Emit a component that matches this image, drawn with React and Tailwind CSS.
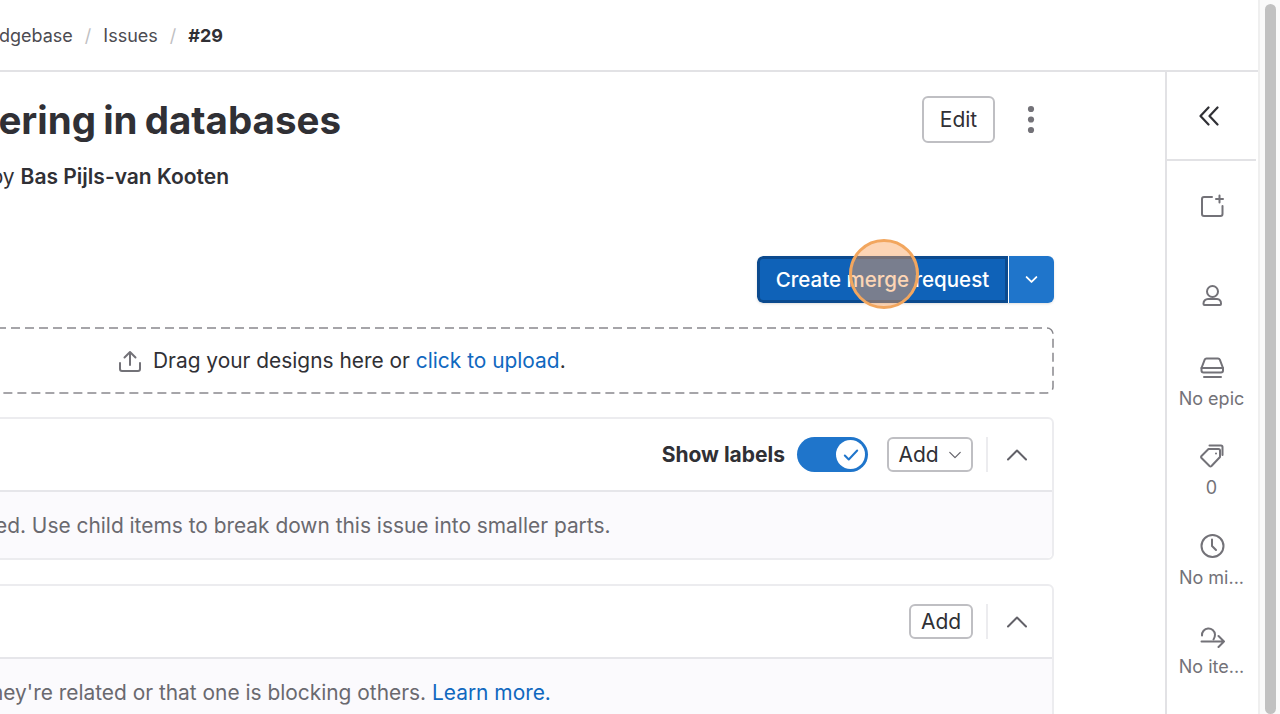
const Chevron = ({ className = '', width = 2 }) => (
  <svg viewBox="0 0 24 24" fill="none" stroke="currentColor" strokeWidth={width} strokeLinecap="round" strokeLinejoin="round" className={className}>
    <path d="M3 16.5 12 7.5l9 9" />
  </svg>
)

function SideItem({ icon, label }) {
  return (
    <div className={`flex h-[89.5px] flex-col items-center justify-center ${label ? 'pb-[6px]' : ''}`}>
      {icon}
      {label && <span className="mt-[8px] text-[18px] leading-[22px] whitespace-nowrap text-[#737278]">{label}</span>}
    </div>
  )
}

const iconProps = {
  fill: 'none',
  stroke: '#737278',
  strokeWidth: 2,
  strokeLinecap: 'round',
  strokeLinejoin: 'round',
  viewBox: '0 0 26 26',
  className: 'h-[26px] w-[26px] shrink-0',
}

function Card({ children, body, top = '' }) {
  return (
    <section className={`-ml-[10px] w-[1064px] rounded-md border-2 border-[#ececef] ${top}`}>
      <header className="flex h-[71px] items-center justify-end pr-[7px]">{children}</header>
      <div className="flex h-[68px] items-center justify-start overflow-hidden rounded-b-md border-t-2 border-[#e6e6ea] bg-[#fbfafd] pt-[2px] pl-[8px] text-[20.9px] whitespace-nowrap text-[#6a696f]">
        {body}
      </div>
    </section>
  )
}

function CardEnd() {
  return (
    <>
      <div className="ml-[13px] h-[35px] w-[2px] bg-[#ececef]" />
      <div className="flex w-[57px] justify-center">
        <Chevron className="h-[24px] w-[24px] text-[#626168]" />
      </div>
    </>
  )
}

export default function App() {
  return (
    <div className="relative flex h-[714px] w-[1280px] overflow-hidden bg-white font-['Inter',sans-serif] text-[#303035]">
      <div className="flex w-[1258px] shrink-0 flex-col">
        <nav className="flex h-[72px] shrink-0 items-center border-b-2 border-[#e2e2e5]">
          <div className="flex w-[223px] shrink-0 items-center justify-end gap-[12px] overflow-hidden text-[18px] whitespace-nowrap text-[#4c4b51]">
            <span className="shrink-0">Knowledgebase</span>
            <span className="text-[#bfbfc3]">/</span>
            <span>Issues</span>
            <span className="text-[#bfbfc3]">/</span>
            <span className="font-bold text-[#303035]">#29</span>
          </div>
        </nav>

        <div className="flex min-h-0 flex-1">
          <main className="w-[1165px] shrink-0 overflow-hidden pr-[111px]">
            <div className="flex h-[184px] justify-between">
              <div className="whitespace-nowrap">
                <div className="flex w-[341px] justify-end overflow-hidden pt-[22px]">
                  <h1 className="shrink-0 text-[38.5px] leading-[52px] font-bold [word-spacing:-2px]">ering in databases</h1>
                </div>
                <div className="mt-[18px] flex w-[229px] justify-end overflow-hidden text-[21px] leading-[26px] font-semibold">
                  <span className="shrink-0"><span className="font-normal">by </span>Bas Pijls-van Kooten</span>
                </div>
              </div>
              <div className="flex h-fit items-center gap-[32px] pt-[24px] pr-[19px]">
                <button className="flex h-[47px] w-[73px] items-center justify-center rounded-md border-2 border-[#bfbfc3] text-[21px]">Edit</button>
                <svg viewBox="0 0 8 30" className="h-[30px] w-[8px]" fill="#737278">
                  <circle cx="4" cy="4" r="3.1" />
                  <circle cx="4" cy="14.5" r="3.1" />
                  <circle cx="4" cy="25" r="3.1" />
                </svg>
              </div>
            </div>

            <div className="flex justify-end">
              <div className="flex h-[47px] overflow-hidden rounded-md text-white shadow-sm">
                <button className="flex w-[251px] items-center justify-center rounded-l-md border-[3px] border-[#0b4a8e] bg-[#0f62b8] pt-[1px] text-[20.5px] font-medium">Create merge request</button>
                <button className="ml-px flex w-[45px] items-center justify-center bg-[#1f75cb]">
                  <Chevron className="h-[13px] w-[13px] rotate-180" width={3.4} />
                </button>
              </div>
            </div>

            <div className="relative -ml-[10px] mt-[24px] flex h-[67px] w-[1064px] items-center pl-[127px] text-[20.9px] whitespace-nowrap">
              <svg className="absolute inset-0 h-full w-full" fill="none">
                <rect x="1" y="1" width="1062" height="65" rx="6" stroke="#89888d" strokeWidth="1.5" strokeDasharray="9 5" />
              </svg>
              <svg {...iconProps} className="mr-[10px] h-[26px] w-[26px] shrink-0">
                <path d="M13 17V4M7.500 9.500 13 4l5.500 5.500" />
                <path d="M3 15v6a2 2 0 0 0 2 2h16a2 2 0 0 0 2-2v-6" />
              </svg>
              <span>Drag your designs here or <span className="text-[#1068bf]">click to upload</span>.</span>
            </div>

            <div className="mt-[23px]">
              <Card body={<span className="-ml-[5px]">ed. Use child items to break down this issue into smaller parts.</span>}>
                <span className="text-[21px] font-bold">Show labels</span>
                <div className="ml-[12px] flex h-[35px] w-[71px] items-center justify-end rounded-full bg-[#1f75cb] pr-[3px]">
                  <div className="flex h-[29px] w-[29px] items-center justify-center rounded-full bg-white">
                    <svg viewBox="0 0 16 16" className="h-[18px] w-[18px]" fill="none" stroke="#1f75cb" strokeWidth="1.8" strokeLinecap="round" strokeLinejoin="round">
                      <path d="M2.5 8.5 6 12l7.5-8" />
                    </svg>
                  </div>
                </div>
                <button className="ml-[19px] flex h-[35px] w-[86px] items-center justify-center gap-[9px] rounded-md border-2 border-[#bfbfc3] text-[21px]">
                  Add
                  <Chevron className="h-[14px] w-[14px] rotate-180 text-[#626168]" />
                </button>
                <CardEnd />
              </Card>

              <Card
                top="mt-[24px]"
                body={<span className="-ml-[9px]">hey're related or that one is blocking others. <span className="text-[#1068bf]">Learn more.</span></span>}
              >
                <button className="flex h-[35px] w-[64px] items-center justify-center rounded-md border-2 border-[#bfbfc3] text-[21px]">Add</button>
                <CardEnd />
              </Card>
            </div>
          </main>

          <aside className="flex w-[91px] shrink-0 flex-col border-l-2 border-[#e2e2e5]">
            <div className="flex h-[89px] shrink-0 items-center justify-center border-b-2 border-[#e2e2e5] pr-[6px]">
              <svg viewBox="0 0 20 20" className="h-[20px] w-[20px]" fill="none" stroke="#303035" strokeWidth="2.2" strokeLinecap="round" strokeLinejoin="round">
                <path d="M9.500 1.500 1.500 10l8 8.500M18.500 1.500 10.500 10l8 8.500" />
              </svg>
            </div>
            <SideItem
              icon={
                <svg {...iconProps}>
                  <path d="M13 4H5a2 2 0 0 0-2 2v15a2 2 0 0 0 2 2h16.500a2 2 0 0 0 2-2v-8" />
                  <path d="M20.500 2.500v7M17 6h7" />
                </svg>
              }
            />
            <SideItem
              icon={
                <svg {...iconProps}>
                  <circle cx="13.500" cy="9.500" r="5.500" />
                  <path d="M9 17h9a4.500 4.500 0 0 1 4 4.500v.5a1 1 0 0 1-1 1H5.500a1 1 0 0 1-1-1v-.5A4.500 4.500 0 0 1 9 17z" />
                </svg>
              }
            />
            <SideItem
              label="No epic"
              icon={
                <svg {...iconProps}>
                  <path d="M7.500 4.500h11.500a2 2 0 0 1 1.800 1.200L24 14v2.500a2 2 0 0 1-2 2H4.500a2 2 0 0 1-2-2V14l3.200-8.300a2 2 0 0 1 1.800-1.200z" />
                  <path d="M2.500 14H24M5 23h17" />
                </svg>
              }
            />
            <SideItem
              label="0"
              icon={
                <svg {...iconProps}>
                  <path d="M2.500 13 9.500 6h10a1.500 1.500 0 0 1 1.500 1.500V14l-8.500 9a1.500 1.500 0 0 1-2 0l-8-8a1.400 1.400 0 0 1 0-2z" />
                  <path d="M10.500 2.500h11.500a1.500 1.500 0 0 1 1.500 1.500v8" />
                  <circle cx="17" cy="10.500" r="1" fill="#737278" stroke="none" />
                </svg>
              }
            />
            <SideItem
              label="No mi..."
              icon={
                <svg {...iconProps}>
                  <circle cx="13.500" cy="13" r="11" />
                  <path d="M13 6.500V13l4 4" />
                </svg>
              }
            />
            <SideItem
              label="No ite..."
              icon={
                <svg {...iconProps}>
                  <path d="M3 13.500a6.500 6.500 0 0 1 13-1c0 2-.5 3.500-1.500 5" />
                  <path d="M2.500 19.500H25M19.500 14l5.500 5.500-5.500 5.500" />
                </svg>
              }
            />
          </aside>
        </div>
      </div>

      <div className="flex w-[22px] shrink-0 justify-center border-l-2 border-[#efefef] bg-[#fafafa] pt-[4px]">
        <div className="h-full w-[11px] rounded-full bg-[#c1c1c1]" />
      </div>

      <div className="absolute top-[239px] left-[849px] h-[70px] w-[70px] rounded-full border-[3px] border-[#f2a65e] bg-[#fba25a]/45" />
    </div>
  )
}
